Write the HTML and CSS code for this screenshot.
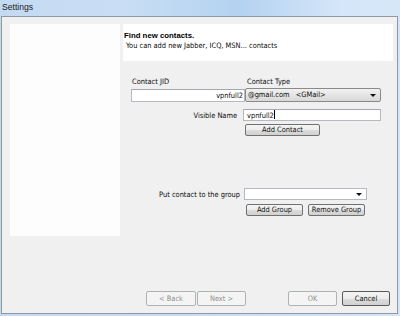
FILE: index.html
```html
<!DOCTYPE html>
<html>
<head>
<meta charset="utf-8">
<link rel="stylesheet" href="styles.css">
</head>
<body>
<div class="window">
  <div class="titlebar">Settings</div>
  <div class="client">
    <div class="main">
      <div class="sidebar"></div>
      <div class="content">
        <div class="header">
          <div class="h-title">Find new contacts.</div>
          <div class="h-sub">You can add new Jabber, ICQ, MSN... contacts</div>
        </div>
        <div class="row labels">
          <span class="lbl-jid">Contact JID</span>
          <span class="lbl-type">Contact Type</span>
        </div>
        <div class="row r-inputs">
          <div class="input jid">vpnfull2</div>
          <div class="combo gray"><span>@gmail.com&nbsp;&nbsp;&nbsp;&lt;GMail&gt;</span><i class="arrow"></i></div>
        </div>
        <div class="row r-name">
          <span class="rlabel name-lbl">Visible Name</span>
          <div class="input name">vpnfull2<span class="caret"></span></div>
        </div>
        <div class="row r-add">
          <button class="btn add-contact">Add Contact</button>
        </div>
        <div class="row r-group">
          <span class="rlabel group-lbl">Put contact to the group</span>
          <div class="combo white"><span></span><i class="arrow"></i></div>
        </div>
        <div class="row r-gbtns">
          <button class="btn add-group">Add Group</button>
          <button class="btn remove-group">Remove Group</button>
        </div>
      </div>
    </div>
    <div class="footer">
      <button class="btn disabled back">&lt; Back</button>
      <button class="btn disabled next">Next &gt;</button>
      <button class="btn disabled ok">OK</button>
      <button class="btn cancel">Cancel</button>
    </div>
  </div>
</div>
</body>
</html>
```

FILE: styles.css
```css
* { box-sizing: border-box; }
html, body { margin: 0; padding: 0; }
body {
  width: 400px;
  height: 316px;
  overflow: hidden;
  font-family: "DejaVu Sans Condensed", "Liberation Sans", Arial, sans-serif;
  font-size: 7.4px;
  color: #0a0a0a;
}
.window {
  width: 400px;
  height: 316px;
  display: flex;
  flex-direction: column;
  background: linear-gradient(to right, #c6d8ec, #c9dcf1 50%, #d5e5f6);
}
.titlebar {
  height: 16px;
  padding-left: 2px;
  font-family: "Liberation Sans", Arial, sans-serif;
  font-size: 8.6px;
  line-height: 15px;
  color: #1b1b1b;
  background: linear-gradient(to right, #c4daf2 0%, #c9def4 30%, #b4d2f1 60%, #d4e6f9 85%, #d6e7f8 100%);
}
.client {
  flex: 1;
  margin: 0 2px 2px 1px;
  border: 1px solid #8e99a5;
  background: #f0f0f0;
  display: flex;
  flex-direction: column;
  padding: 7px 4px 7px 8px;
}
.main {
  display: flex;
  gap: 3px;
}
.sidebar {
  width: 110px;
  height: 212px;
  background: #fdfdfd;
}
.content {
  flex: 1;
  display: flex;
  flex-direction: column;
}
.header {
  height: 37px;
  background: #ffffff;
  padding: 7px 0 0 1px;
  line-height: 10px;
}
.h-title {
  font-family: "Liberation Sans", Arial, sans-serif;
  font-size: 7.8px;
  font-weight: bold;
  color: #000;
}
.h-sub { padding-left: 2px; }
.row { display: flex; align-items: center; white-space: nowrap; }
.labels { margin-top: 16px; height: 10px; line-height: 10px; }
.lbl-jid { margin-left: 9px; width: 115px; }
.r-inputs { margin-top: 1px; }
.input {
  background: #fff;
  border: 1px solid #b5b9c0;
  border-top-color: #a3a7ae;
  height: 13px;
  line-height: 11px;
  padding: 0 1px 0 3px;
  white-space: nowrap;
}
.jid { margin-left: 8px; width: 114px; text-align: right; }
.combo {
  position: relative;
  height: 14px;
  line-height: 12px;
  padding-left: 2px;
  border: 1px solid #8a8a8a;
  border-radius: 2px;
}
.combo.gray {
  width: 136px;
  margin-left: 0;
  background: linear-gradient(#f2f2f2, #e4e4e4 50%, #d8d8d8);
}
.combo.white {
  width: 123px;
  height: 12px;
  background: #fff;
  border-color: #b5b9c0;
  border-radius: 0;
}
.arrow {
  position: absolute;
  right: 4px;
  top: 50%;
  margin-top: -1px;
  width: 0;
  height: 0;
  border-left: 3px solid transparent;
  border-right: 3px solid transparent;
  border-top: 3px solid #111;
}
.r-name { margin-top: 7px; }
.rlabel { text-align: right; white-space: nowrap; }
.name-lbl { width: 114px; margin-right: 6px; }
.name { width: 138px; height: 12px; line-height: 10px; }
.caret {
  display: inline-block;
  width: 1px;
  height: 9px;
  background: #000;
  vertical-align: -1px;
  margin-left: 0;
}
.r-add { margin-top: 3px; }
.btn {
  font-family: inherit;
  font-size: 7.4px;
  color: #111;
  height: 12px;
  line-height: 10px;
  padding: 0;
  margin: 0;
  white-space: nowrap;
  border: 1px solid #707070;
  border-radius: 2px;
  background: linear-gradient(#f4f4f4, #ececec 50%, #dddddd 51%, #d0d0d0);
}
.add-contact { margin-left: 122px; width: 75px; }
.r-group { margin-top: 52px; }
.group-lbl { width: 117px; margin-right: 4px; }
.r-gbtns { margin-top: 4px; }
.add-group { margin-left: 123px; width: 57px; }
.remove-group { margin-left: 5px; width: 57px; }
.footer {
  margin-top: auto;
  display: flex;
}
.footer .btn { height: 15px; line-height: 13px; }
.btn.disabled {
  color: #8d8d8d;
  border-color: #adb2b5;
  background: #f4f4f4;
}
.back { margin-left: 136px; width: 50px; }
.next { margin-left: 1px; width: 49px; }
.ok { margin-left: 42px; width: 49px; }
.cancel { margin-left: 5px; width: 48px; border-color: #5a5a5a; }
```
